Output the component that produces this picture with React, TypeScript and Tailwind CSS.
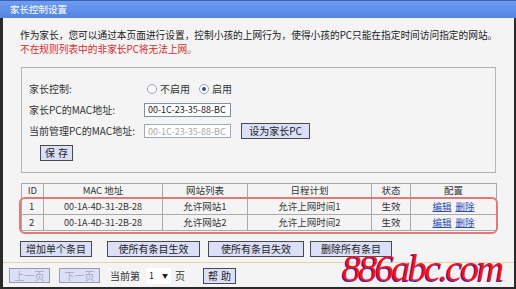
import React from 'react';

const rows = [
    { id: 1, mac: '00-1A-4D-31-2B-28', site: '允许网站1', plan: '允许上网时间1', state: '生效' },
    { id: 2, mac: '00-1A-4D-31-2B-28', site: '允许网站2', plan: '允许上网时间2', state: '生效' },
];

const btnCls = 'h-[16px] flex items-center justify-center border border-[#4a4a4a] bg-[#dcdff8] text-[#222] text-[10px] leading-none';

const Radio = ({ checked }: { checked?: boolean }) => (
    <span className="w-[10px] h-[10px] rounded-full border border-[#9aa3b8] bg-white flex items-center justify-center">
        {checked && <span className="w-[4px] h-[4px] rounded-full bg-[#2d4f9e]" />}
    </span>
);

export default function App() {
    return (
        <div className="relative w-[516px] h-[289px] overflow-hidden bg-[#f4f4f4] text-[10px] leading-none text-[#222] font-['Noto_Sans_CJK_SC',sans-serif]">
            {/* title bar */}
            <div className="h-[18px] flex items-center pl-[10px] bg-gradient-to-b from-[#6e9cf0] to-[#5285e2] border-t border-[#3a5fb0] text-white text-[9.5px]">
                家长控制设置
            </div>

            <div className="h-[271px] flex flex-col border-l-[3px] border-r-2 border-b-2 border-[#2a2a2a]">
                <div className="flex-1 flex flex-col px-[17px] pt-[10px]">
                    <p className="leading-[14px] text-[9.7px] whitespace-nowrap text-[#1a1a1a]">
                        作为家长，您可以通过本页面进行设置，控制小孩的上网行为，使得小孩的PC只能在指定时间访问指定的网站。
                    </p>
                    <p className="leading-[14px] text-[9.7px] text-[#d42a2a]">不在规则列表中的非家长PC将无法上网。</p>

                    {/* settings box */}
                    <div className="mt-[11px] ml-[1px] w-[475px] h-[106px] border border-[#b4b4b4] pl-[7px] pt-[10px] flex flex-col">
                        <div className="h-[21px] flex items-center">
                            <span className="w-[115px] text-[#333]">家长控制:</span>
                            <div className="flex items-center ml-[3px]">
                                <Radio />
                                <span className="ml-[3px] text-[#333]">不启用</span>
                                <span className="ml-[9px]"><Radio checked /></span>
                                <span className="ml-[3px] text-[#333]">启用</span>
                            </div>
                        </div>
                        <div className="h-[21px] flex items-center">
                            <span className="w-[115px] text-[#333]">家长PC的MAC地址:</span>
                            <div className="w-[87px] h-[14px] border border-[#7f8fa8] bg-white flex items-center pl-[3px] text-[9px] text-[#222]">
                                00-1C-23-35-88-BC
                            </div>
                        </div>
                        <div className="h-[22px] flex items-center">
                            <span className="w-[115px] text-[#333]">当前管理PC的MAC地址:</span>
                            <div className="w-[87px] h-[14px] border border-[#9aa8c0] bg-white flex items-center pl-[3px] text-[9px] text-[#a8a8a8]">
                                00-1C-23-35-88-BC
                            </div>
                            <button className={`${btnCls} ml-[10px] w-[69px] h-[15px]`}>设为家长PC</button>
                        </div>
                        <div className="mt-[3px] ml-[11px]">
                            <button className={`${btnCls} w-[33px] h-[15px] tracking-[3px] pl-[3px]`}>保存</button>
                        </div>
                    </div>

                    {/* rule table */}
                    <div className="relative mt-[10px] ml-[1px] w-[475px]">
                        <table className="w-[475px] border-collapse table-fixed text-[9.5px] text-[#333]">
                            <thead>
                                <tr className="h-[15px]">
                                    <th className="w-[22px] border border-[#a9a9a9] font-normal">ID</th>
                                    <th className="w-[119px] border border-[#a9a9a9] font-normal">MAC 地址</th>
                                    <th className="w-[85px] border border-[#a9a9a9] font-normal">网站列表</th>
                                    <th className="w-[124px] border border-[#a9a9a9] font-normal">日程计划</th>
                                    <th className="w-[39px] border border-[#a9a9a9] font-normal">状态</th>
                                    <th className="w-[86px] border border-[#a9a9a9] font-normal">配置</th>
                                </tr>
                            </thead>
                            <tbody>
                                {rows.map((r) => (
                                    <tr key={r.id} className="h-[16px]">
                                        <td className="border border-[#a9a9a9] pl-[7px]">{r.id}</td>
                                        <td className="border border-[#a9a9a9] text-center text-[9px]">{r.mac}</td>
                                        <td className="border border-[#a9a9a9] text-center">{r.site}</td>
                                        <td className="border border-[#a9a9a9] text-center">{r.plan}</td>
                                        <td className="border border-[#a9a9a9] text-center">{r.state}</td>
                                        <td className="border border-[#a9a9a9] text-center text-[#2b4fb0]">
                                            <span className="underline">编辑</span>
                                            <span className="underline ml-[4px]">删除</span>
                                        </td>
                                    </tr>
                                ))}
                            </tbody>
                        </table>
                        {/* highlight outline over the rows */}
                        <div className="absolute left-[-2px] right-[-2px] top-[14px] bottom-[-3px] rounded-[6px] border-2 border-[#e27878] pointer-events-none" />
                    </div>

                    {/* action buttons */}
                    <div className="mt-[10px] flex items-center">
                        <button className={`${btnCls} w-[72px]`}>增加单个条目</button>
                        <button className={`${btnCls} w-[93px] ml-[15px]`}>使所有条目生效</button>
                        <button className={`${btnCls} w-[96px] ml-[8px]`}>使所有条目失效</button>
                        <button className={`${btnCls} w-[82px] ml-[6px]`}>删除所有条目</button>
                    </div>
                </div>

                {/* paging bar */}
                <div className="h-[25px] border-t border-[#e4d4a8] flex items-center px-[6px] pt-[1px]">
                    <button className="w-[41px] h-[15px] flex items-center justify-center border border-[#9a9aaa] bg-[#dcdff8] text-[#a5a8c0]">上一页</button>
                    <button className="w-[41px] h-[15px] ml-[9px] flex items-center justify-center border border-[#9a9aaa] bg-[#dcdff8] text-[#a5a8c0]">下一页</button>
                    <span className="ml-[10px] text-[#333]">当前第</span>
                    <div className="ml-[6px] w-[25px] h-[16px] bg-white flex items-center justify-between px-[3px]">
                        <span className="text-[9px]">1</span>
                        <span className="text-[6px] text-[#222]">▼</span>
                    </div>
                    <span className="ml-[4px] text-[#333]">页</span>
                    <button className={`${btnCls} ml-[18px] w-[33px] h-[15px] tracking-[3px] pl-[3px]`}>帮助</button>
                </div>
            </div>

            {/* watermark */}
            <div className="absolute left-[342px] top-[258px] h-[20px] text-[38px] leading-[20px] tracking-[-2.5px] italic font-['Liberation_Serif',serif] text-[#ff1010] [text-shadow:-1px_1px_0_#1a30e0]">
                886abc.com
            </div>
        </div>
    );
}
